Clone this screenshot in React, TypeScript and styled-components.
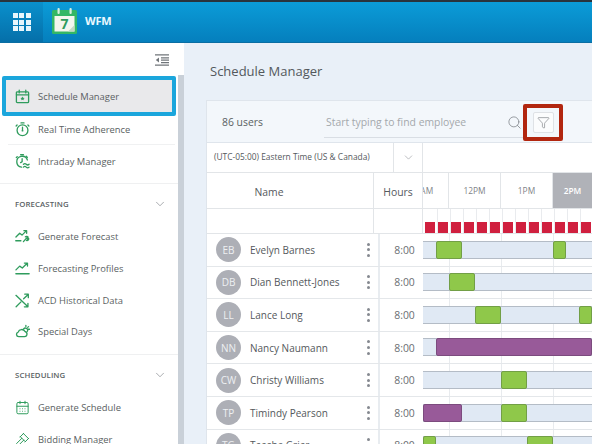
import React from "react";
import styled, { createGlobalStyle } from "styled-components";
import { CalendarDays, Gavel, Search, ChevronDown, Funnel } from "lucide-react";

const Global = createGlobalStyle`
  html, body { margin: 0; padding: 0; width: 592px; height: 444px; overflow: hidden; background: #e9f0f8; }
  * { box-sizing: border-box; }
  body { font-family: "Open Sans", "Liberation Sans", sans-serif; color: #555a5f; }
`;

const Page = styled.div`
  width: 592px; height: 444px; overflow: hidden; display: flex; flex-direction: column;
`;
const TopBar = styled.header`
  height: 43px; flex: none; display: flex; align-items: stretch;
  border-top: 2px solid #29343d; border-bottom: 1px solid #0a6ea3;
  background: linear-gradient(#0b9cd8, #057fbd);
`;
const AppsButton = styled.div`
  width: 43px; display: flex; align-items: center; justify-content: center;
  background: linear-gradient(#0a90cc, #056fa9);
`;
const AppsGrid = styled.div`
  width: 18px; height: 18px; display: grid; grid-template-columns: repeat(3, 5px); grid-auto-rows: 5px; gap: 1.5px;
  span { background: #e8f6fc; }
`;
const Logo = styled.svg`
  width: 28px; height: 28px; margin: 5px 0 0 8px;
`;
const Brand = styled.div`
  margin-left: 6px; color: #eaf8fe; font-weight: 700; font-size: 11px; line-height: 38px; letter-spacing: -0.2px;
`;
const Main = styled.div`
  flex: 1; min-height: 0; display: flex;
`;
const Sidebar = styled.aside`
  width: 184px; flex: none; background: #fff; display: flex; flex-direction: column; overflow: hidden;
`;
const SideTop = styled.div`
  height: 32px; flex: none; display: flex; justify-content: flex-end; align-items: flex-start; padding: 11px 15px 0 0;
`;
const SideScroll = styled.div`
  flex: 1; min-height: 0; border-right: 6px solid #c9d0d8;
`;
const ActiveItem = styled.div`
  margin: 1px 2px 0 2px; height: 40px; border: 4px solid #1ba6dc; border-radius: 2px; background: #e9e9eb;
  display: flex; align-items: center; gap: 8px; padding-left: 9px; font-size: 9.4px; color: #5b5f63;
`;
const NavItem = styled.div<{ $h?: number; $line?: boolean }>`
  height: ${(p) => p.$h ?? 31.7}px; margin-left: 8px; margin-right: 3px; display: flex; align-items: center; gap: 8px; padding-left: 7px;
  padding-bottom: ${(p) => (p.$line ? 2 : 0)}px;
  font-size: 9.4px; color: #5b5f63;
  border-bottom: ${(p) => (p.$line ? "1px solid #f0f1f2" : "none")};
`;
const Divider = styled.div`
  height: 1px; background: #eff0f1; margin-top: 6px;
`;
const Section = styled.div`
  height: 37px; display: flex; align-items: center; justify-content: space-between; padding: 3px 11px 0 15px;
  font-size: 7.8px; font-weight: 600; color: #5a5f64; letter-spacing: 0.1px;
`;
const Content = styled.main`
  flex: 1; min-width: 0; background: #e9f0f8; padding-left: 22px;
`;
const Title = styled.h1`
  margin: 0; padding-left: 4px; height: 57px; font-size: 13px; line-height: 57px; font-weight: 400; color: #53585c;
`;
const Table = styled.section`
  width: 420px; border: 1px solid #dfe5ec; border-right: none; background: #fff;
`;
const Toolbar = styled.div`
  height: 42px; background: #f3f7fb; border-bottom: 1px solid #dfe5ec; display: flex; align-items: center; position: relative;
`;
const Users = styled.div`
  width: 117px; padding-left: 15px; font-size: 10.4px; color: #5a5f63;
`;
const SearchBox = styled.div`
  width: 199px; height: 30px; border-bottom: 1px solid #d9dee4; margin-top: 2px; display: flex; align-items: center; justify-content: space-between;
  padding: 0 1px 0 2px; font-size: 10.4px; color: #a4a8ac;
`;
const FilterMark = styled.div`
  width: 40px; height: 37px; border: 4px solid #b2260f; border-radius: 2px; display: flex; align-items: center; justify-content: center; margin-top: 1px;
`;
const FilterButton = styled.div`
  width: 21px; height: 21px; background: #fbfcfd; border: 1px solid #dfe2e6; border-radius: 2px; display: flex; align-items: center; justify-content: center;
`;
const ZoneRow = styled.div`
  height: 30px; display: flex; border-bottom: 1px solid #e2e5e8;
`;
const ZoneText = styled.div`
  width: 187px; padding-left: 7px; line-height: 28px; font-size: 8.4px; color: #55595d; white-space: nowrap; border-right: 1px solid #e2e5e8;
`;
const ZoneArrow = styled.div`
  width: 29px; display: flex; align-items: center; justify-content: center; border-right: 1px solid #e2e5e8;
`;
const HeaderRow = styled.div`
  height: 36px; display: flex; border-bottom: 1px solid #e2e5e8;
`;
const NameHead = styled.div`
  width: 167px; text-align: center; padding-right: 42px; line-height: 38px; font-size: 10.4px; color: #55595d; border-right: 1px solid #e2e5e8;
`;
const HoursHead = styled.div`
  width: 49px; text-align: center; line-height: 38px; font-size: 10.4px; color: #55595d; border-right: 1px solid #e2e5e8;
`;
const HourCell = styled.div<{ $w: number; $active?: boolean }>`
  width: ${(p) => p.$w}px; flex: none; overflow: hidden; display: flex; align-items: center; justify-content: center;
  font-size: 8.4px; color: ${(p) => (p.$active ? "#fff" : "#7f8388")}; font-weight: ${(p) => (p.$active ? 600 : 400)};
  background: ${(p) => (p.$active ? "#b0b2b8" : "#fff")};
  border-right: ${(p) => (p.$active ? "none" : "1px solid #e2e5e8")};
`;
const ClippedHourCell = styled.div`
  width: 26px; flex: none; overflow: hidden; display: flex; align-items: center; justify-content: flex-end;
  font-size: 8.4px; color: #7f8388; border-right: 1px solid #e2e5e8;
  span { flex: none; width: 52px; text-align: center; }
`;
const MarkRow = styled.div`
  height: 25px; display: flex; border-bottom: 1px solid #e2e5e8;
`;
const MarkBlank = styled.div<{ $w: number }>`
  width: ${(p) => p.$w}px; flex: none; border-right: 1px solid #e2e5e8;
`;
const Marks = styled.div`
  display: flex; flex: none; padding-left: 2px; overflow: hidden; width: 170px;
`;
const Mark = styled.div`
  width: 13px; flex: none; height: 24px; display: flex; align-items: flex-end; border-right: 1px solid #e9ebee;
  span { display: block; width: 10px; height: 11px; background: #d0203f; }
`;
const Row = styled.div`
  height: 32.6px; display: flex; border-bottom: 1px solid #e4e7ea;
`;
const NameCell = styled.div`
  width: 173px; flex: none; display: flex; align-items: center; padding-left: 9px; border-right: 2px solid #e8ecf0;
`;
const Avatar = styled.div`
  width: 25px; height: 25px; border-radius: 50%; background: #adafb6; color: #eef0f2; font-size: 10px; flex: none;
  display: flex; align-items: center; justify-content: center;
`;
const PersonName = styled.div`
  margin-left: 9px; flex: 1; font-size: 10px; color: #54585c; white-space: nowrap;
`;
const Dots = styled.div`
  width: 3px; margin-right: 8px; display: flex; flex-direction: column; gap: 2.6px;
  span { width: 3px; height: 3px; border-radius: 50%; background: #858990; }
`;
const HoursCell = styled.div`
  width: 43px; flex: none; display: flex; align-items: center; justify-content: center; padding-left: 6px; font-size: 10.4px; color: #6a6e72;
`;
const Timeline = styled.div`
  width: 169px; flex: none; padding-top: 6.6px;
  background: repeating-linear-gradient(90deg, #e8ebee 0 1px, transparent 1px 52px) 26px 0 / 100% 100% no-repeat;
`;
const Track = styled.div`
  height: 18px; display: grid; grid-template-columns: repeat(13, 13px); grid-template-rows: 18px;
  background: #e0e9f4; border-top: 1px solid #b4bcc6; border-bottom: 1px solid #b4bcc6;
`;
const Segment = styled.div<{ $start: number; $span: number; $kind: "break" | "absent" }>`
  grid-row: 1; grid-column: ${(p) => p.$start + 1} / span ${(p) => p.$span};
  margin-top: -1px; height: 18px; border-radius: 2px;
  background: ${(p) => (p.$kind === "break" ? "#8fc84a" : "#985a99")};
  border: 1px solid ${(p) => (p.$kind === "break" ? "#729f46" : "#7c4b7e")};
`;

const G = "#2f9c5d";

const IconSvg = styled.svg`
  width: 15px; height: 15px; flex: none; fill: none; stroke: ${G}; stroke-width: 1.4; stroke-linecap: round; stroke-linejoin: round;
`;
const ScheduleIcon = () => (
  <IconSvg viewBox="0 0 16 16">
    <rect x="1.5" y="3" width="13" height="11.5" rx="1" />
    <path d="M1.5 6.2h13M4.5 1.2v3M11.5 1.2v3" />
    <path d="M8 8l.7 1.4 1.5.2-1.1 1 .3 1.5L8 11.4l-1.4.7.3-1.5-1.1-1 1.5-.2z" fill={G} stroke="none" />
  </IconSvg>
);
const TimerIcon = () => (
  <IconSvg viewBox="0 0 16 16">
    <circle cx="8" cy="8.8" r="5.8" />
    <path d="M6.4 1h3.2M2.2 3.2 1.2 4.2M13.8 3.2l1 1M8 5.6v2.6" />
    <circle cx="8" cy="9.2" r="1" fill={G} stroke="none" />
  </IconSvg>
);
const IntradayIcon = () => (
  <IconSvg viewBox="0 0 16 16">
    <path d="M13.2 6.4A5.8 5.8 0 1 0 7 14" />
    <path d="M7.6 5v3.2l-1.6 1M6 .8h3M2.4 2.8 1.4 3.8M12 2.4l1.2 1.2" />
    <path d="M9 11c1-1 2-1 3 0s2 1 3 0M9 14c1-1 2-1 3 0s2 1 3 0" />
  </IconSvg>
);
const GenForecastIcon = () => (
  <IconSvg viewBox="0 0 16 16">
    <path d="M1 8.5 5 4.5l2.5 2L12 2M9.5 1.8H12.4V4.6" />
    <path d="M.8 12.5h5.5M9 13.5l3-3.5 1.2-1M11 8.4c.8-.8 2.6-.4 3 .2l-1.4 1.2.5.9 1.5-.6c.3 1.2-.8 2.6-2.4 2" />
  </IconSvg>
);
const ProfilesIcon = () => (
  <IconSvg viewBox="0 0 16 16">
    <path d="M1 9.5 5 5.5l2.8 2L13 2.5M10 2.2h3.3v3.2" />
    <path d="M1 13.5h14" strokeWidth="1.6" />
  </IconSvg>
);
const AcdIcon = () => (
  <IconSvg viewBox="0 0 16 16">
    <path d="M1 2.5 13.5 14.5M10 14.7h3.8v-3.7" />
    <path d="M9.2 6.2 14 1.5M10.4 1.2H14.2V5M1.2 14.6 6.4 9.5" />
  </IconSvg>
);
const SpecialIcon = () => (
  <IconSvg viewBox="0 0 16 16">
    <path d="M4 13.5h6.2a2.8 2.8 0 0 0 .5-5.5A4 4 0 0 0 3.4 8.6 2.5 2.5 0 0 0 4 13.5z" />
    <path d="M9.2 5.2a2.4 2.4 0 0 1 4 2.6M11.6 1.4v1.2M15.4 5.6h-1.2M14.4 2.8l-.8.8" />
  </IconSvg>
);
const ToggleIcon = () => (
  <svg width="14" height="12" viewBox="0 0 14 12" fill="none" stroke="#70757a" strokeWidth="1.2">
    <path d="M0 .8h14M6 3.8h8M6 6.2h8M6 8.6h8M0 11.2h14" />
    <path d="M4 3.6v4.8L.8 6z" fill="#70757a" stroke="none" />
  </svg>
);
const iconProps = { size: 15, color: G, strokeWidth: 1.6, style: { flex: "none" as const } };

const people: [string, string, [number, number, "break" | "absent"][]][] = [
  ["EB", "Evelyn Barnes", [[1, 2, "break"], [10, 1, "break"]]],
  ["DB", "Dian Bennett-Jones", [[2, 2, "break"]]],
  ["LL", "Lance Long", [[4, 2, "break"], [12, 1, "break"]]],
  ["NN", "Nancy Naumann", [[1, 12, "absent"]]],
  ["CW", "Christy Williams", [[6, 2, "break"]]],
  ["TP", "Timindy Pearson", [[0, 3, "absent"], [6, 2, "break"]]],
  ["TG", "Teesha Grier", [[0, 1, "break"], [8, 2, "break"]]],
];

export default function App() {
  return (
    <Page>
      <Global />
      <TopBar>
        <AppsButton>
          <AppsGrid>{Array.from({ length: 9 }, (_, i) => <span key={i} />)}</AppsGrid>
        </AppsButton>
        <Logo viewBox="0 0 28 28">
          <rect x="1" y="3" width="25" height="24" rx="1.5" fill="#34b765" />
          <rect x="3.5" y="9" width="20" height="15.5" fill="#f4f6ee" />
          <path d="M23.5 18v6.5H17z" fill="#c5d9c4" />
          <rect x="6.5" y="1" width="2.2" height="6" rx="1" fill="#d8efe0" />
          <rect x="18.5" y="1" width="2.2" height="6" rx="1" fill="#d8efe0" />
          <text x="13.5" y="22" textAnchor="middle" fontSize="14" fontWeight="700" fill="#2f9c5d" fontFamily="Open Sans, sans-serif">7</text>
        </Logo>
        <Brand>WFM</Brand>
      </TopBar>
      <Main>
        <Sidebar>
          <SideTop><ToggleIcon /></SideTop>
          <SideScroll>
            <ActiveItem><ScheduleIcon />Schedule Manager</ActiveItem>
            <NavItem $h={29} $line><TimerIcon />Real Time Adherence</NavItem>
            <NavItem $h={32}><IntradayIcon />Intraday Manager</NavItem>
            <Divider />
            <Section>FORECASTING<ChevronDown size={14} color="#6d7277" strokeWidth={1} /></Section>
            <NavItem><GenForecastIcon />Generate Forecast</NavItem>
            <NavItem><ProfilesIcon />Forecasting Profiles</NavItem>
            <NavItem><AcdIcon />ACD Historical Data</NavItem>
            <NavItem><SpecialIcon />Special Days</NavItem>
            <Divider />
            <Section>SCHEDULING<ChevronDown size={14} color="#6d7277" strokeWidth={1} /></Section>
            <NavItem><CalendarDays {...iconProps} />Generate Schedule</NavItem>
            <NavItem><Gavel {...iconProps} />Bidding Manager</NavItem>
          </SideScroll>
        </Sidebar>
        <Content>
          <Title>Schedule Manager</Title>
          <Table>
            <Toolbar>
              <Users>86 users</Users>
              <SearchBox>
                Start typing to find employee
                <Search size={15} color="#7a7f84" strokeWidth={1.2} />
              </SearchBox>
              <FilterMark>
                <FilterButton><Funnel size={13} color="#6f7378" strokeWidth={1.1} /></FilterButton>
              </FilterMark>
            </Toolbar>
            <ZoneRow>
              <ZoneText>(UTC-05:00) Eastern Time (US &amp; Canada)</ZoneText>
              <ZoneArrow><ChevronDown size={13} color="#84888d" strokeWidth={1} /></ZoneArrow>
            </ZoneRow>
            <HeaderRow>
              <NameHead>Name</NameHead>
              <HoursHead>Hours</HoursHead>
              <ClippedHourCell><span>11AM</span></ClippedHourCell>
              <HourCell $w={52}>12PM</HourCell>
              <HourCell $w={52}>1PM</HourCell>
              <HourCell $w={39} $active>2PM</HourCell>
            </HeaderRow>
            <MarkRow>
              <MarkBlank $w={167} />
              <MarkBlank $w={49} />
              <Marks>
                {Array.from({ length: 13 }, (_, i) => <Mark key={i}><span /></Mark>)}
              </Marks>
            </MarkRow>
            {people.map(([initials, name, segments]) => (
              <Row key={name}>
                <NameCell>
                  <Avatar>{initials}</Avatar>
                  <PersonName>{name}</PersonName>
                  <Dots><span /><span /><span /></Dots>
                </NameCell>
                <HoursCell>8:00</HoursCell>
                <Timeline>
                  <Track>
                    {segments.map(([start, span, kind]) => (
                      <Segment key={start} $start={start} $span={span} $kind={kind} />
                    ))}
                  </Track>
                </Timeline>
              </Row>
            ))}
          </Table>
        </Content>
      </Main>
    </Page>
  );
}
